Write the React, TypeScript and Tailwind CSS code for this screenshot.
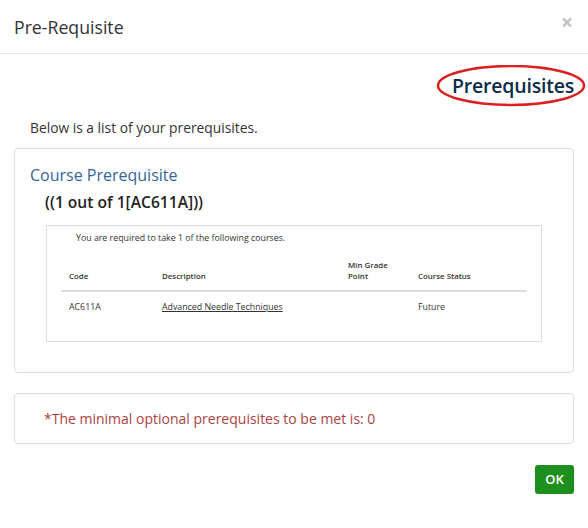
import React from 'react';

const font = { fontFamily: '"Open Sans", "Noto Sans", sans-serif' };

export default function App() {
  return (
    <div className="w-[588px] h-[528px] bg-white text-[#333]" style={font}>
      {/* modal header */}
      <div className="h-[54px] pl-[14px] pr-[14px] flex items-center justify-between border-b border-[#e5e5e5]">
        <h4 className="text-[17.7px] leading-[24px] text-[#333]">Pre-Requisite</h4>
        <button className="text-[21px] leading-none font-bold text-[#c2c2c2] -mt-[8px] mr-[1px]">×</button>
      </div>

      <div className="px-[14px]">
        {/* highlighted heading */}
        <div className="flex justify-end pt-[18px]">
          <div className="relative">
            <h2 className="text-[19.5px] leading-[28px] font-semibold text-[#0c2b4b] tracking-[-0.2px]">Prerequisites</h2>
            <svg
              className="absolute -left-[16px] -top-[7px] pointer-events-none"
              width="150"
              height="44"
              viewBox="0 0 150 44"
            >
              <ellipse cx="75" cy="20.5" rx="73" ry="19.5" fill="none" stroke="#dc2020" strokeWidth="2.5" />
            </svg>
          </div>
        </div>

        <p className="mt-[18px] pl-[16px] text-[13.8px] leading-[20px]">Below is a list of your prerequisites.</p>

        {/* prerequisite panel */}
        <div className="mt-[10px] border border-[#dddddd] rounded-[4px] pt-[15px] pb-[30px]">
          <h3 className="pl-[15px] text-[16px] leading-[22px] font-medium text-[#336699]">Course Prerequisite</h3>
          <div className="pl-[30px] mt-[4px] text-[15.6px] leading-[24px] font-semibold text-[#222]">((1 out of 1[AC611A]))</div>

          <div className="mt-[11px] mx-[31px] border border-[#dddddd] pt-[6px] pb-[20px]">
            <p className="pl-[29px] text-[8.8px] leading-[12px] text-[#333]">You are required to take 1 of the following courses.</p>
            <div className="mt-[8px] mx-[14px]">
              <table className="w-full border-collapse text-[#333]">
                <thead>
                  <tr className="border-b-2 border-[#dddddd] text-[7.9px] leading-[11px] font-semibold text-left align-bottom">
                    <th className="w-[93px] px-[8px] pt-[8px] pb-[8px] font-semibold">Code</th>
                    <th className="w-[186px] px-[8px] pt-[8px] pb-[8px] font-semibold">Description</th>
                    <th className="w-[70px] px-[8px] pt-[8px] pb-[8px] font-semibold">Min Grade<br />Point</th>
                    <th className="px-[8px] pt-[8px] pb-[8px] font-semibold">Course Status</th>
                  </tr>
                </thead>
                <tbody>
                  <tr className="text-[8.8px] leading-[12px]">
                    <td className="px-[8px] pt-[9px] pb-[8px]">AC611A</td>
                    <td className="px-[8px] pt-[9px] pb-[8px]">
                      <a className="underline text-[#333]">Advanced Needle Techniques</a>
                    </td>
                    <td className="px-[8px] pt-[9px] pb-[8px]"></td>
                    <td className="px-[8px] pt-[9px] pb-[8px]">Future</td>
                  </tr>
                </tbody>
              </table>
            </div>
          </div>
        </div>

        {/* minimal optional note */}
        <div className="mt-[20px] border border-[#dddddd] rounded-[4px] pt-[15px] pb-[14px] pl-[29px]">
          <p className="text-[14px] leading-[20px] text-[#a94442]">*The minimal optional prerequisites to be met is: 0</p>
        </div>

        <div className="flex justify-end mt-[21px]">
          <button className="w-[39px] h-[29px] rounded-[3px] bg-[#1e8e1e] text-white text-[13px] font-semibold">OK</button>
        </div>
      </div>
    </div>
  );
}
